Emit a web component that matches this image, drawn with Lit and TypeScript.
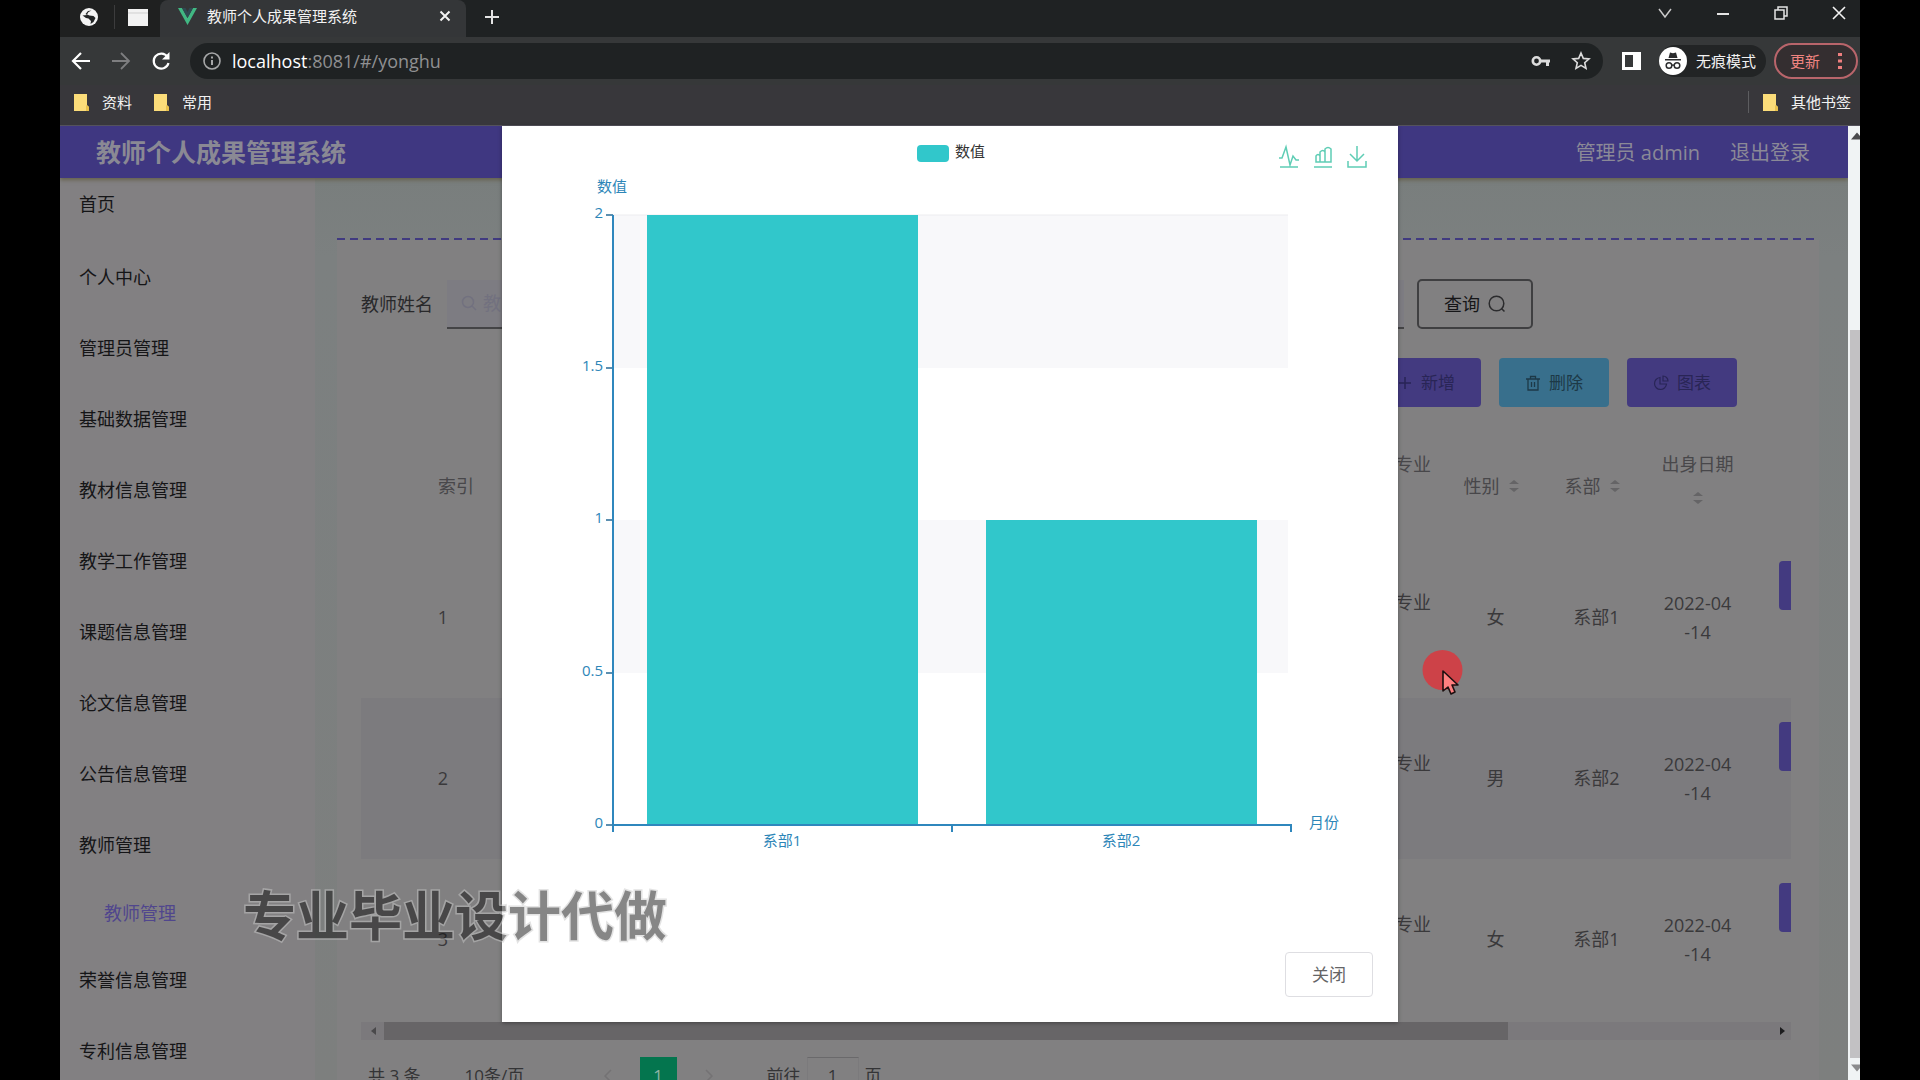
import { LitElement, html, svg, css } from "lit";
import { customElement, state } from "lit/decorators.js";

interface Teacher {
  index: number;
  major: string;
  gender: string;
  department: string;
  birthday: string;
}

interface Point {
  label: string;
  value: number;
}

const FONT = css`"Open Sans", "Noto Sans CJK SC", sans-serif`;

@customElement("browser-chrome")
export class BrowserChrome extends LitElement {
  static styles = css`
    :host { display: block; font-family: ${FONT}; font-size: 15px; line-height: 20px; color: #f2f2f2; background: #38373b; }
    button { border: 0; padding: 0; margin: 0; background: none; color: inherit; font: inherit; display: flex; align-items: center; justify-content: center; }
    a { color: inherit; text-decoration: none; }
    svg { display: block; flex: none; }
    .tabs { display: flex; height: 37px; box-sizing: border-box; background: #1f2223; align-items: stretch; }
    .pinned { display: flex; align-items: center; width: 100px; padding-bottom: 3px; box-sizing: border-box; background: #1f2020; }
    .pinned .globe { width: 54px; padding-left: 3px; box-sizing: border-box; }
    .pinned .win { flex: 1; border-left: 1px solid #3c3c3d; height: 24px; }
    .tab { display: flex; align-items: center; width: 306px; box-sizing: border-box; padding: 0 14px 5px 18px; background: #343638; height: 37px; border-radius: 8px 8px 0 0; }
    .tab .title { flex: 1; padding-left: 10px; white-space: nowrap; }
    .plus { width: 52px; padding-bottom: 4px; }
    .space { flex: 1; }
    .controls { display: flex; align-items: flex-start; padding-top: 4px; margin-right: -8px; }
    .controls button { width: 58px; height: 18px; }
    .toolbar { display: flex; align-items: center; height: 48px; background: #363839; padding: 0 2px 0 0; }
    .nav { display: flex; width: 130px; padding-left: 1px; box-sizing: border-box; }
    .nav button { width: 40px; height: 32px; }
    .nav .off { color: #7e7e80; }
    .address { flex: 1; display: flex; align-items: center; height: 36px; border-radius: 18px; background: #1f2223; padding: 0 12px; gap: 10px; box-sizing: border-box; margin-right: 19px; }
    .url { flex: 1; font-size: 18px; color: #8f9092; white-space: nowrap; }
    .url b { font-weight: 400; color: #ffffff; }
    .address .marks { display: flex; gap: 20px; }
    .incog { display: flex; align-items: center; gap: 9px; height: 32px; margin-left: 18px; border-radius: 16px; background: #222425; padding-right: 10px; white-space: nowrap; }
    .update { margin-left: 8px; height: 36px; width: 84px; box-sizing: border-box; border: 2px solid #b9656b; border-radius: 18px; color: #ef8480; gap: 18px; background: #342e30; }
    .marksbar { display: flex; align-items: center; height: 41px; padding: 0 9px 6px 14px; box-sizing: border-box; gap: 22px; border-bottom: 1px solid #54525c; }
    .marksbar a { display: flex; align-items: center; gap: 13px; white-space: nowrap; }
    .sep { width: 1px; height: 22px; background: #5d5d60; margin-right: -8px; }
  `;

  private folder() {
    return html`<svg width="15" height="18" viewBox="0 0 15 18" aria-hidden="true"><path d="M0 1h13v11l2 2v4H0z" fill="#fbdc79"/><path d="M12 12l3 2v4h-3z" fill="#e9c14c"/></svg>`;
  }

  render() {
    return html`
      <div class="tabs">
        <div class="pinned">
          <button class="globe" aria-label="固定标签页"><svg width="20" height="20" viewBox="0 0 20 20"><circle cx="10" cy="10" r="9" fill="#f4f4f4"/><path d="M12.500 3.500L9.500 5 8 7.500l2.500 1 4 .5 2 2-2 4-3 2 .5-3-2.500-2.500L7 11 3.500 8.500l4.500-.5-1.500-1L9 4z" fill="#222425"/></svg></button>
          <button class="win" aria-label="窗口"><svg width="22" height="17" viewBox="0 0 22 17"><path d="M1 0h20v17H1z" fill="#f2f2f2"/><path d="M1 4h20" stroke="#cfcfcf"/></svg></button>
        </div>
        <div class="tab">
          <svg width="19" height="17" viewBox="0 0 19 17"><path d="M0 0h4l5.500 10L15 0h4L9.500 17z" fill="#41b883"/><path d="M4 0h3.500l2 4 2-4H15L9.500 10z" fill="#2f4a52"/></svg>
          <span class="title">教师个人成果管理系统</span>
          <button aria-label="关闭标签页"><svg width="14" height="14" viewBox="0 0 14 14"><path d="M2.500 2.500l9 9M11.500 2.500l-9 9" stroke="#f2f2f2" stroke-width="2"/></svg></button>
        </div>
        <button class="plus" aria-label="新标签页"><svg width="16" height="16" viewBox="0 0 16 16"><path d="M8 1v14M1 8h14" stroke="#e4e4e4" stroke-width="2"/></svg></button>
        <span class="space"></span>
        <div class="controls">
          <button aria-label="搜索标签页"><svg width="14" height="14" viewBox="0 0 14 14"><path d="M1 3l6 8 6-8" fill="none" stroke="#c9c9c9" stroke-width="1.500"/></svg></button>
          <button aria-label="最小化"><svg width="14" height="14" viewBox="0 0 14 14"><path d="M1 8h12" stroke="#e4e4e4" stroke-width="2"/></svg></button>
          <button aria-label="还原"><svg width="14" height="14" viewBox="0 0 14 14"><path d="M1 4h9v9H1zM4 4V1h9v9h-3" fill="none" stroke="#e4e4e4" stroke-width="1.500"/></svg></button>
          <button aria-label="关闭"><svg width="14" height="14" viewBox="0 0 14 14"><path d="M1 1l12 12M13 1L1 13" stroke="#f2f2f2" stroke-width="1.600"/></svg></button>
        </div>
      </div>
      <div class="toolbar">
        <div class="nav">
          <button aria-label="后退"><svg width="20" height="18" viewBox="0 0 20 18"><path d="M19 9H2M10 1L2 9l8 8" fill="none" stroke="#fff" stroke-width="2.200"/></svg></button>
          <button class="off" aria-label="前进"><svg width="20" height="18" viewBox="0 0 20 18"><path d="M1 9h17M10 1l8 8-8 8" fill="none" stroke="currentColor" stroke-width="1.800"/></svg></button>
          <button aria-label="刷新"><svg width="20" height="20" viewBox="0 0 20 20"><path d="M16.500 6A7.500 7.500 0 1 0 17.500 12" fill="none" stroke="#fff" stroke-width="2.200"/><path d="M18.500 1v7.500H11z" fill="#fff"/></svg></button>
        </div>
        <div class="address">
          <svg width="20" height="20" viewBox="0 0 20 20"><circle cx="10" cy="10" r="8" fill="none" stroke="#a6a7a8" stroke-width="1.600"/><path d="M10 9v5M10 5.500v2" stroke="#a6a7a8" stroke-width="2"/></svg>
          <span class="url"><b>localhost</b>:8081/#/yonghu</span>
          <span class="marks">
            <button aria-label="密码"><svg width="20" height="12" viewBox="0 0 20 12"><circle cx="5.500" cy="6" r="3.700" fill="none" stroke="#dcdcdc" stroke-width="2.600"/><path d="M9 6h10M16.500 6v5" stroke="#dcdcdc" stroke-width="3"/></svg></button>
            <button aria-label="收藏"><svg width="20" height="20" viewBox="0 0 20 20"><path d="M10 2l2.300 5.400 5.700.5-4.300 3.800 1.300 5.700-5-3-5 3 1.300-5.700L2 7.900l5.700-.5z" fill="none" stroke="#dcdcdc" stroke-width="1.600"/></svg></button>
          </span>
        </div>
        <button aria-label="侧边栏"><svg width="19" height="18" viewBox="0 0 19 18"><path d="M1.500 1.500h16v15h-16z" fill="none" stroke="#fff" stroke-width="3"/><path d="M11 1h7v16h-7z" fill="#fff"/></svg></button>
        <span class="incog"><svg width="28" height="28" viewBox="0 0 28 28"><circle cx="14" cy="14" r="14" fill="#fff"/><path d="M9.500 11L11 5.500l3 .8 3-.8 1.500 5.500zM6 12h16v1.600H6z" fill="#2b2c2e"/><path d="M13 18.500q1-.8 2 0" fill="none" stroke="#2b2c2e" stroke-width="1.500"/><circle cx="10" cy="18.500" r="2.800" fill="none" stroke="#2b2c2e" stroke-width="1.500"/><circle cx="18" cy="18.500" r="2.800" fill="none" stroke="#2b2c2e" stroke-width="1.500"/></svg>无痕模式</span>
        <button class="update">更新<svg width="4" height="18" viewBox="0 0 4 18"><path d="M0 1h4v3H0zM0 7.500h4v3H0zM0 14h4v3H0z" fill="#ef7f7f"/></svg></button>
      </div>
      <div class="marksbar">
        <a href="#ziliao">${this.folder()}资料</a>
        <a href="#changyong">${this.folder()}常用</a>
        <span class="space"></span>
        <span class="sep"></span>
        <a href="#other">${this.folder()}其他书签</a>
      </div>
    `;
  }
}

@customElement("value-chart")
export class ValueChart extends LitElement {
  static properties = { points: { attribute: false } };
  points: Point[] = [];

  static styles = css`
    :host { display: block; }
    .chart { display: block; width: 100%; font-family: ${FONT}; font-size: 15px; }
    .axis { stroke: #2f87bd; stroke-width: 2; fill: none; }
    .tick { stroke: #5b8fb0; stroke-width: 2; fill: none; }
    .text { fill: #2d86b8; }
    .legend { fill: #333; }
    .band { fill: #f8f8fa; }
    .bar { fill: #31c7cb; }
    .tool { stroke: #5fcdb5; stroke-width: 1.500; fill: none; }
  `;

  render() {
    const left = 111, right = 789, top = 89, bottom = 699, max = 2;
    const step = (right - left) / Math.max(1, this.points.length);
    const y = (v: number) => Math.round(bottom - ((bottom - top) * v) / max);
    const ticks = [0, 0.5, 1, 1.5, 2];
    return html`
      <svg class="chart" viewBox="0 0 896 799" role="img" aria-label="数值">
        <rect class="bar" x="415" y="19" width="32" height="17" rx="4"/>
        <text class="legend" x="453" y="31">数值</text>
        <g class="tool">
          <path d="M777 32h3l4-11 4 18 3-9 3 4h3M778 41h18"/>
          <path d="M814 36v-6q2-3 4 0v6zM818 36V26q3-3 5 0v10zM823 36V23q3-3 6 0v13zM812 41h18"/>
          <path d="M855 20v15M848 28l7 7 7-7M846 35v6h18v-6"/>
        </g>
        <rect class="band" x=${left} y=${y(2)} width=${right - left - 3} height=${y(1.5) - y(2)}/>
        <rect class="band" x=${left} y=${y(1)} width=${right - left - 3} height=${y(0.5) - y(1)}/>
        <path d="M${left} ${top}H${right - 3}" stroke="#ececef"/>
        ${this.points.map((p, i) => svg`
          <rect class="bar" x=${Math.round(left + step * (i + 0.1))} y=${y(p.value)} width=${Math.round(step * 0.8)} height=${bottom - y(p.value)}></rect>
          <text class="text" x=${Math.round(left + step * (i + 0.5)) - 1} y="720" text-anchor="middle">${p.label}</text>
          <path class="axis" d="M${Math.round(left + step * (i + 1))} ${bottom}v7"></path>`)}
        ${ticks.map((t) => svg`
          <path class="tick" d="M${left - 7} ${y(t)}h7"></path>
          <text class="text" x=${left - 10} y=${y(t) + 3} text-anchor="end">${t}</text>`)}
        <path class="axis" d="M${left} ${top}V${bottom + 7}M${left - 1} ${bottom}H${right + 1}"/>
        <text class="text" x="95" y="66">数值</text>
        <text class="text" x="807" y="702">月份</text>
      </svg>
    `;
  }
}

@customElement("app-root")
export class AppRoot extends LitElement {
  @state() private open = true;

  private readonly menu = ["个人中心", "管理员管理", "基础数据管理", "教材信息管理", "教学工作管理", "课题信息管理", "论文信息管理", "公告信息管理", "教师管理"];
  private readonly tail = ["荣誉信息管理", "专利信息管理"];
  private readonly points: Point[] = [{ label: "系部1", value: 2 }, { label: "系部2", value: 1 }];
  private readonly rows: Teacher[] = [
    { index: 1, major: "专业", gender: "女", department: "系部1", birthday: "2022-04-14" },
    { index: 2, major: "专业", gender: "男", department: "系部2", birthday: "2022-04-14" },
    { index: 3, major: "专业", gender: "女", department: "系部1", birthday: "2022-04-14" },
  ];

  static styles = css`
    :host { display: block; height: 100vh; background: #000; font-family: ${FONT}; font-size: 18px; line-height: 29px; color: #3c3c3e; }
    button { font: inherit; margin: 0; padding: 0; border: 0; color: inherit; background: none; display: flex; align-items: center; justify-content: center; }
    a { color: inherit; text-decoration: none; }
    svg { display: block; flex: none; }
    .frame { position: relative; height: 100%; margin: 0 60px; display: flex; flex-direction: column; overflow: hidden; }
    .view { position: relative; flex: 1; min-height: 0; display: flex; }
    .page { flex: 1; min-width: 0; display: flex; flex-direction: column; overflow: hidden; background: #808180; }
    .header { flex: none; display: flex; align-items: center; gap: 30px; height: 52px; padding: 0 38px 0 36px; background: #3f3781; color: #8b8997; font-size: 20px; box-shadow: 0 2px 4px #65604c; z-index: 1; }
    .header h1 { flex: 1; margin: 0; font-size: 25px; line-height: 32px; font-weight: 700; color: #8a8994; }
    .body { flex: 1; display: flex; min-height: 0; }
    .side { flex: none; width: 255px; background: #828082; color: #151517; }
    .side a { display: flex; align-items: center; height: 71px; padding-left: 19px; }
    .side .home { height: 53px; margin-bottom: 11px; }
    .side .sub { height: 64px; padding-left: 44px; color: #50468d; }
    .main { flex: 1; min-width: 0; padding: 60px 29px 0 22px; background: linear-gradient(#797e7d, #7c8080 80px, #7d7f7e); }
    .dash { height: 2px; background: repeating-linear-gradient(90deg, #403a80 0 8px, transparent 8px 13px); }
    .card { background: #818081; padding: 39px 28px 0 24px; }
    .search { display: flex; align-items: center; height: 50px; padding-right: 258px; }
    .search label { flex: none; width: 86px; color: #29292b; }
    .field { flex: 1; display: flex; align-items: center; gap: 6px; height: 47px; padding-left: 14px; border-bottom: 2px solid #444446; background: #7d7c82; color: #72717f; }
    .field input { flex: 1; min-width: 0; border: 0; outline: 0; background: none; font: inherit; color: #2b2b2e; padding: 0; }
    .field input::placeholder { color: #72717f; opacity: 1; }
    .query { flex: none; width: 116px; height: 50px; box-sizing: border-box; margin-left: 13px; border: 2px solid #3f3f41; border-radius: 5px; gap: 8px; color: #161618; }
    .actions { display: flex; justify-content: flex-end; gap: 18px; padding: 29px 54px 28px 0; }
    .actions button { width: 110px; height: 49px; border-radius: 4px; background: #433a80; color: #292556; gap: 8px; font-size: 17px; }
    .actions .del { background: #386f8c; color: #1d3947; }
    .wrap { overflow: hidden; }
    table { width: calc(100% + 160px); table-layout: fixed; border-collapse: collapse; text-align: center; }
    th, td { padding: 0 14px; font-weight: 400; color: #3a393b; box-sizing: border-box; }
    th { color: #48474a; height: 102px; white-space: nowrap; }
    td { height: 161px; }
    .c-index { width: 164px; }
    .c-col { width: 101px; }
    .c-op { width: 203px; }
    th.index { padding-left: 40px; }
    th.major, td.major { text-align: right; vertical-align: top; }
    th.major, th.stack { padding-top: 15px; vertical-align: top; }
    td.major { padding-top: 51px; }
    td.date { word-break: break-all; }
    td.op { vertical-align: top; padding: 24px 0 0 31px; }
    tr.alt { background: #7c7b7e; }
    td.op button { width: 100px; height: 49px; border-radius: 4px; background: #433a80; }
    .sort { display: inline-block; vertical-align: middle; margin: 0 8px; }
    .single { display: inline-flex; align-items: center; }
    .stack .sort { display: block; margin: 12px auto 0; }
    .hbar { display: flex; align-items: center; gap: 7px; height: 18px; margin-top: 2px; padding: 0 5px 0 9px; background: #7b797c; }
    .rail { flex: 1; }
    .thumb { width: 81%; height: 18px; background: #676567; }
    .pager { display: flex; align-items: center; height: 37px; margin-top: 17px; padding-left: 7px; font-size: 17px; color: #343436; white-space: nowrap; }
    .pager .size { width: 131px; margin-left: 44px; }
    .pager select { appearance: none; border: 0; background: none; font: inherit; color: inherit; padding: 0; }
    .pager .step { width: 24px; color: #747274; }
    .pager .current { width: 37px; height: 37px; margin: 0 20px; background: #04754e; color: #8fb3a4; }
    .pager .goto { display: flex; align-items: center; gap: 6px; margin-left: 46px; }
    .pager input { width: 52px; height: 37px; box-sizing: border-box; border: 1px solid #7b7a7c; border-top-color: #6a696b; background: none; font: inherit; color: inherit; text-align: center; padding: 0; }
    .vbar { flex: none; width: 12px; display: flex; flex-direction: column; align-items: flex-end; background: #f0f3f4; overflow: hidden; }
    .vbar .gap { height: 182px; }
    .vbar .handle { flex: 1; width: 10px; background: #c2c1c3; }
    .vbar svg { margin: 6px 0 8px; }
    .mask { position: absolute; inset: 0 12px 0 0; display: flex; justify-content: center; align-items: flex-start; padding-right: 8px; z-index: 2; }
    .dialog { width: 896px; max-width: 90%; background: #fff; box-shadow: 0 1px 4px rgba(0, 0, 0, 0.35); }
    .foot { display: flex; justify-content: flex-end; padding: 27px 25px 25px; }
    .foot button { width: 88px; height: 45px; box-sizing: border-box; border: 1px solid #dedee2; border-radius: 4px; background: #fff; color: #646466; font-size: 17px; }
    .mark { position: absolute; left: 183px; bottom: 137px; z-index: 3; font-family: "Noto Sans CJK SC", sans-serif; font-size: 53px; line-height: 60px; font-weight: 700; color: #101010; opacity: 0.5; -webkit-text-stroke: 3px #c8c8c8; paint-order: stroke fill; white-space: nowrap; pointer-events: none; }
    .pointer { position: absolute; left: 1362px; top: 649px; z-index: 4; pointer-events: none; }
  `;

  private sort() {
    return html`<svg class="sort" width="12" height="14" viewBox="0 0 12 14" aria-hidden="true"><path d="M1 5l5-4 5 4zM1 9l5 4 5-4z" fill="#656466"/></svg>`;
  }

  render() {
    return html`
      <div class="frame">
        <browser-chrome></browser-chrome>
        <div class="view">
          <div class="page">
            <header class="header">
              <h1>教师个人成果管理系统</h1>
              <span>管理员 admin</span>
              <a href="#logout">退出登录</a>
            </header>
            <div class="body">
              <nav class="side">
                <a class="home" href="#home">首页</a>
                ${this.menu.map((m) => html`<a href="#menu">${m}</a>`)}
                <a class="sub" href="#yonghu">教师管理</a>
                ${this.tail.map((m) => html`<a href="#menu">${m}</a>`)}
              </nav>
              <main class="main">
                <div class="dash"></div>
                <section class="card">
                  <form class="search" @submit=${(e: Event) => e.preventDefault()}>
                    <label for="name">教师姓名</label>
                    <div class="field">
                      <svg width="16" height="16" viewBox="0 0 16 16"><circle cx="7" cy="7" r="5.500" fill="none" stroke="currentColor" stroke-width="1.500"/><path d="M11 11l4 4" stroke="currentColor" stroke-width="1.500"/></svg>
                      <input id="name" type="text" placeholder="教师姓名" />
                    </div>
                    <button class="query" type="submit">查询<svg width="18" height="18" viewBox="0 0 18 18"><circle cx="8.500" cy="8.500" r="7.300" fill="none" stroke="#2b2b2d" stroke-width="1.500"/><path d="M13.500 13.500l3 3" stroke="#2b2b2d" stroke-width="1.500"/></svg></button>
                  </form>
                  <div class="actions">
                    <button><svg width="16" height="16" viewBox="0 0 16 16"><path d="M8 2v12M2 8h12" stroke="currentColor" stroke-width="1.500"/></svg>新增</button>
                    <button class="del"><svg width="16" height="16" viewBox="0 0 16 16"><path d="M1 4h14M5.500 4V1.500h5V4M3 4v11h10V4M6.500 7v5M9.500 7v5" fill="none" stroke="currentColor" stroke-width="1.300"/></svg>删除</button>
                    <button @click=${() => (this.open = true)}><svg width="16" height="16" viewBox="0 0 16 16"><path d="M7 2.500A6 6 0 1 0 13.500 9H7zM10 1v5h5a5 5 0 0 0-5-5z" fill="none" stroke="currentColor" stroke-width="1.200"/></svg>图表</button>
                  </div>
                  <div class="wrap">
                    <table>
                      <colgroup><col class="c-index" /><col /><col class="c-col" /><col class="c-col" /><col class="c-col" /><col class="c-col" /><col class="c-op" /></colgroup>
                      <thead>
                        <tr><th class="index">索引</th><th></th><th class="major">专业</th>
                          <th><span class="single">性别${this.sort()}</span></th>
                          <th><span class="single">系部${this.sort()}</span></th>
                          <th class="stack">出身日期${this.sort()}</th><th></th></tr>
                      </thead>
                      <tbody>
                        ${this.rows.map((r, i) => html`<tr class=${i % 2 ? "alt" : ""}>
                          <td>${r.index}</td><td></td><td class="major">${r.major}</td><td>${r.gender}</td><td>${r.department}</td>
                          <td class="date">${r.birthday}</td><td class="op"><button aria-label="详情"></button></td></tr>`)}
                      </tbody>
                    </table>
                  </div>
                  <div class="hbar">
                    <svg width="7" height="10" viewBox="0 0 7 10"><path d="M6 1v8L1 5z" fill="#4a494b"/></svg>
                    <div class="rail"><div class="thumb"></div></div>
                    <svg width="7" height="10" viewBox="0 0 7 10"><path d="M1 1v8l5-4z" fill="#1d1d1f"/></svg>
                  </div>
                  <div class="pager">
                    <span>共 3 条</span>
                    <span class="size"><select aria-label="每页条数"><option>10条/页</option></select></span>
                    <button class="step" aria-label="上一页"><svg width="8" height="14" viewBox="0 0 8 14"><path d="M7 1L1 7l6 6" fill="none" stroke="currentColor" stroke-width="1.500"/></svg></button>
                    <button class="current">1</button>
                    <button class="step" aria-label="下一页"><svg width="8" height="14" viewBox="0 0 8 14"><path d="M1 1l6 6-6 6" fill="none" stroke="currentColor" stroke-width="1.500"/></svg></button>
                    <label class="goto">前往<input type="text" value="1" />页</label>
                  </div>
                </section>
              </main>
            </div>
          </div>
          <div class="vbar">
            <svg width="10" height="8" viewBox="0 0 10 8"><path d="M1 7.500l6-7 6 7z" fill="#4a4a4c"/></svg>
            <span class="gap"></span>
            <span class="handle"></span>
            <svg width="10" height="8" viewBox="0 0 10 8"><path d="M1 .5l6 7 6-7z" fill="#8a8a8c"/></svg>
          </div>
          ${this.open ? html`<div class="mask">
            <div class="dialog" role="dialog" aria-label="图表">
              <value-chart .points=${this.points}></value-chart>
              <div class="foot"><button @click=${() => (this.open = false)}>关闭</button></div>
            </div>
          </div>` : ""}
        </div>
        <div class="mark">专业毕业设计代做</div>
        <svg class="pointer" width="42" height="48" viewBox="0 0 42 48" aria-hidden="true"><circle cx="20.500" cy="21" r="20" fill="#cd4248"/><path d="M21 22v20l5-4 3 7 4-2-3-7h6z" fill="#ff8080" stroke="#1c1010" stroke-width="1.600" stroke-linejoin="round"/></svg>
      </div>
    `;
  }
}
